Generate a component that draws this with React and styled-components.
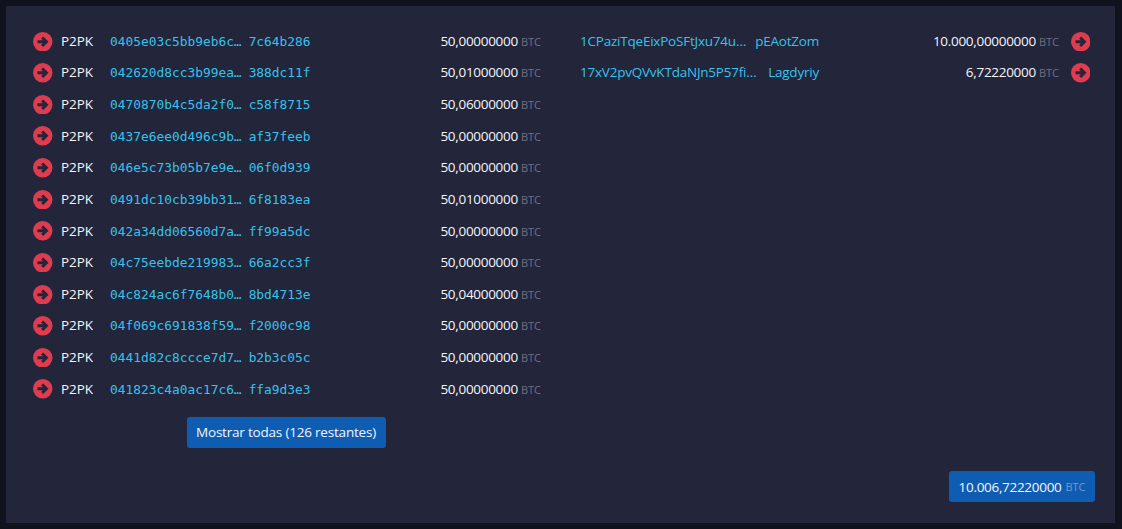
import styled, { createGlobalStyle } from "styled-components";

const inputs = [
  ["0405e03c5bb9eb6c…", "7c64b286", "50,00000000"],
  ["042620d8cc3b99ea…", "388dc11f", "50,01000000"],
  ["0470870b4c5da2f0…", "c58f8715", "50,06000000"],
  ["0437e6ee0d496c9b…", "af37feeb", "50,00000000"],
  ["046e5c73b05b7e9e…", "06f0d939", "50,00000000"],
  ["0491dc10cb39bb31…", "6f8183ea", "50,01000000"],
  ["042a34dd06560d7a…", "ff99a5dc", "50,00000000"],
  ["04c75eebde219983…", "66a2cc3f", "50,00000000"],
  ["04c824ac6f7648b0…", "8bd4713e", "50,04000000"],
  ["04f069c691838f59…", "f2000c98", "50,00000000"],
  ["0441d82c8ccce7d7…", "b2b3c05c", "50,00000000"],
  ["041823c4a0ac17c6…", "ffa9d3e3", "50,00000000"],
];

const outputs = [
  ["1CPaziTqeEixPoSFtJxu74u…", "pEAotZom", "10.000,00000000"],
  ["17xV2pvQVvKTdaNJn5P57fi…", "Lagdyriy", "6,72220000"],
];

const Arrow = ({ $end }) => (
  <ArrowIcon $end={$end} viewBox="0 0 20 20">
    <circle cx="10" cy="10" r="10" fill="#e03c50" />
    <path
      d="M4.6 10h8.6M9.4 5.6l4.4 4.4-4.4 4.4"
      fill="none"
      stroke="#23253b"
      strokeWidth="3"
      strokeLinejoin="miter"
    />
  </ArrowIcon>
);

const App = () => {
  return (
    <>
      <GlobalStyle />
      <Panel>
        <Columns>
          <Column>
            {inputs.map(([head, tail, amount]) => (
              <Row key={head}>
                <Arrow />
                <Kind>P2PK</Kind>
                <Hash>
                  <span>{head}</span>
                  <span>{tail}</span>
                </Hash>
                <Amount>
                  {amount} <Unit>BTC</Unit>
                </Amount>
              </Row>
            ))}
            <ShowMore>Mostrar todas (126 restantes)</ShowMore>
          </Column>
          <Column>
            {outputs.map(([head, tail, amount]) => (
              <Row key={head}>
                <Address>
                  <span>{head}</span>
                  <span>{tail}</span>
                </Address>
                <Amount>
                  {amount} <Unit>BTC</Unit>
                </Amount>
                <Arrow $end />
              </Row>
            ))}
          </Column>
        </Columns>
        <Footer>
          <Total>
            10.006,72220000 <TotalUnit>BTC</TotalUnit>
          </Total>
        </Footer>
      </Panel>
    </>
  );
};

const GlobalStyle = createGlobalStyle`
  html, body {
    margin: 0;
    height: 100%;
    background: #10121e;
  }
  body {
    padding: 6px 7px 6px 6px;
    box-sizing: border-box;
    height: 529px;
    overflow: hidden;
    font-family: "Open Sans", "Noto Sans", sans-serif;
    font-size: 13.5px;
    color: #f6f6f8;
  }
`;

const Panel = styled.div`
  height: 517px;
  box-sizing: border-box;
  padding: 19px 20px 21px 27px;
  background: #23253b;
  display: flex;
  flex-direction: column;
  justify-content: space-between;
`;

const Columns = styled.div`
  display: grid;
  grid-template-columns: 508px 1fr;
  column-gap: 39px;
  padding-right: 5px;
`;

const Column = styled.div`
  display: flex;
  flex-direction: column;
`;

const Row = styled.div`
  height: 31.64px;
  display: flex;
  align-items: center;
`;

const ArrowIcon = styled.svg`
  flex: none;
  width: 19.5px;
  height: 19.5px;
  margin-left: ${(p) => (p.$end ? "11.5px" : "0")};
  position: relative;
  top: 0.5px;
`;

const Kind = styled.span`
  width: 49px;
  margin-left: 8.5px;
  flex: none;
  letter-spacing: -0.1px;
`;

const Hash = styled.span`
  flex: 1;
  display: flex;
  gap: 7px;
  padding-top: 1px;
  color: #36c2ec;
  font-family: "DejaVu Sans Mono", monospace;
  font-size: 12.87px;
`;

const Address = styled.span`
  flex: none;
  width: 239px;
  margin-right: auto;
  display: flex;
  justify-content: space-between;
  color: #36c2ec;
  letter-spacing: -0.22px;
`;

const Amount = styled.span`
  flex: none;
  letter-spacing: -0.3px;
`;

const Unit = styled.small`
  font-size: 11px;
  letter-spacing: -0.05px;
  color: #706f80;
`;

const ShowMore = styled.button`
  align-self: center;
  height: 31px;
  width: 199px;
  padding: 0;
  margin: 12px 0 0 -2px;
  border: 0;
  border-radius: 3px;
  background: #0f5cb3;
  color: #f2f6fb;
  font-family: inherit;
  font-size: 13.5px;
  letter-spacing: -0.2px;
`;

const Footer = styled.div`
  display: flex;
  justify-content: flex-end;
`;

const Total = styled.div`
  height: 31px;
  width: 146px;
  box-sizing: border-box;
  display: flex;
  align-items: center;
  justify-content: center;
  gap: 4px;
  border-radius: 3px;
  background: #0f5cb3;
  letter-spacing: -0.3px;
`;

const TotalUnit = styled.small`
  font-size: 11px;
  letter-spacing: -0.05px;
  color: #6d9bd0;
`;

export default App;
